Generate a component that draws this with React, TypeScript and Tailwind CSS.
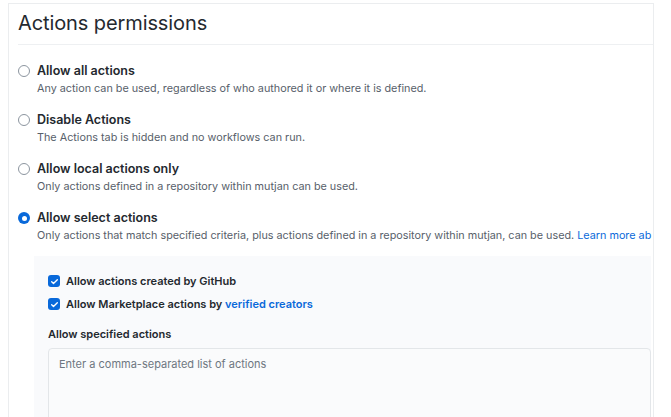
import React from "react";

type Option = {
  title: string;
  description: React.ReactNode;
  checked?: boolean;
};

const options: Option[] = [
  {
    title: "Allow all actions",
    description:
      "Any action can be used, regardless of who authored it or where it is defined.",
  },
  {
    title: "Disable Actions",
    description: "The Actions tab is hidden and no workflows can run.",
  },
  {
    title: "Allow local actions only",
    description:
      "Only actions defined in a repository within mutjan can be used.",
  },
  {
    title: "Allow select actions",
    description: (
      <>
        Only actions that match specified criteria, plus actions defined in a
        repository within mutjan, can be used.{" "}
        <a className="text-[#0969da]">Learn more ab</a>
      </>
    ),
    checked: true,
  },
];

function Radio({ checked }: { checked?: boolean }) {
  if (checked) {
    return (
      <span className="w-[12px] h-[12px] rounded-full bg-[#0969da] flex items-center justify-center shrink-0">
        <span className="w-[5px] h-[5px] rounded-full bg-white" />
      </span>
    );
  }
  return (
    <span className="w-[12px] h-[12px] rounded-full border border-[#8c959f] bg-white shrink-0" />
  );
}

function Checkbox() {
  return (
    <span className="w-[12px] h-[12px] rounded-[3px] bg-[#0969da] flex items-center justify-center shrink-0">
      <svg width="9" height="9" viewBox="0 0 16 16" fill="none">
        <path
          d="M3 8.5l3.2 3.2L13 4.8"
          stroke="white"
          strokeWidth="2.4"
          strokeLinecap="round"
          strokeLinejoin="round"
        />
      </svg>
    </span>
  );
}

export default function App() {
  return (
    <div
      className="w-[671px] h-[417px] bg-white overflow-hidden text-[#24292f]"
      style={{ fontFamily: "Inter, 'Liberation Sans', sans-serif" }}
    >
      <div className="ml-[8px] mt-[3px] w-[646px] h-[414px] border-l border-t border-r border-[#ebedef] pl-[9px] overflow-hidden">
        {/* header */}
        <div className="h-[41px] border-b border-[#eef0f2] pt-[6px]">
          <h2 className="text-[20px] leading-[26px] font-normal tracking-[-0.1px]">
            Actions permissions
          </h2>
        </div>

        {/* radios */}
        <div className="pt-[16px]">
          {options.map((o) => (
            <div key={o.title} className="h-[49px]">
              <div className="flex items-center gap-[7px] h-[20px]">
                <Radio checked={o.checked} />
                <span className="text-[12.5px] font-semibold whitespace-nowrap">
                  {o.title}
                </span>
              </div>
              <p className="pl-[19px] text-[10.8px] leading-[16px] text-[#57606a] whitespace-nowrap">
                {o.description}
              </p>
            </div>
          ))}
        </div>

        {/* select actions panel */}
        <div className="ml-[16px] mt-[-1px] w-[617px] h-[200px] bg-[#f9fafc] pl-[14px] pt-[17px]">
          <div className="flex items-center gap-[6px] h-[16px]">
            <Checkbox />
            <span className="text-[11px] font-semibold whitespace-nowrap">
              Allow actions created by GitHub
            </span>
          </div>
          <div className="flex items-center gap-[6px] h-[16px] mt-[7px]">
            <Checkbox />
            <span className="text-[11px] font-semibold whitespace-nowrap">
              Allow Marketplace actions by{" "}
              <a className="text-[#0969da]">verified creators</a>
            </span>
          </div>
          <div className="mt-[14px] text-[11px] font-semibold leading-[16px]">
            Allow specified actions
          </div>
          <div className="mt-[6px] h-[100px] border border-[#e3e6e9] rounded-[4px] bg-[#fafbfc] pl-[10px] pt-[7px] text-[11px] text-[#6e7781]">
            Enter a comma-separated list of actions
          </div>
        </div>
      </div>
    </div>
  );
}
